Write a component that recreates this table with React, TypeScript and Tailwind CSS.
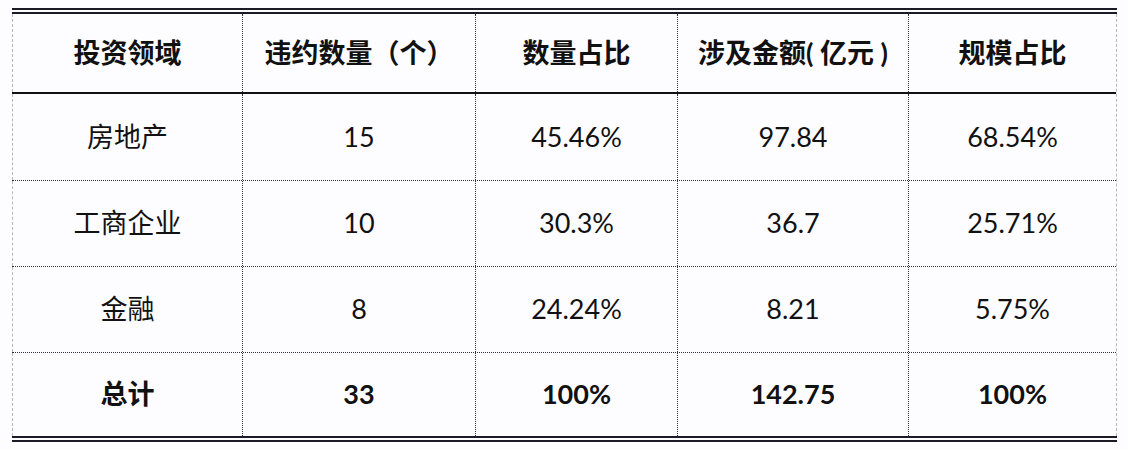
const headers = ['投资领域', '违约数量（个）', '数量占比', '涉及金额( 亿元 )', '规模占比'];

const rows = [
  ['房地产', '15', '45.46%', '97.84', '68.54%'],
  ['工商企业', '10', '30.3%', '36.7', '25.71%'],
  ['金融', '8', '24.24%', '8.21', '5.75%'],
];

const total = ['总计', '33', '100%', '142.75', '100%'];

const cols = ['w-[230px]', 'w-[233px]', 'w-[202px]', 'w-[231px]', 'w-[208px]'];

function Row({ cells, height, bold, line }: { cells: string[]; height: string; bold?: boolean; line: string }) {
  return (
    <div className={`flex ${height} ${line}`}>
      {cells.map((c, i) => (
        <div
          key={i}
          className={`${cols[i]} ${
            i === 0 ? 'border-l border-dashed border-[#b8b8b8]' : 'border-l border-dotted border-[#2e2e3a]'
          } flex items-center justify-center ${bold ? 'font-bold' : 'font-normal'} shrink-0`}
        >
          {c}
        </div>
      ))}
    </div>
  );
}

export default function App() {
  return (
    <div className="w-[1128px] h-[450px] bg-[#fdfdff] pt-2 pl-3 text-[27px] text-[#111] font-['Lato','Noto_Sans_CJK_SC',sans-serif]">
      <div className="w-[1105px]">
        <div className="border-t-[6px] border-double border-[#1b1b28]" />
        <div className="border-r border-dashed border-[#b8b8b8]">
          <Row cells={headers} height="h-[80px]" bold line="border-b-2 border-solid border-b-[#111]" />
          {rows.map((r, i) => (
            <Row
              key={i}
              cells={r}
              height={i === 0 ? 'h-[87px]' : 'h-[86px]'}
              line="border-b border-dotted border-b-[#2e2e3a]"
            />
          ))}
          <Row cells={total} height="h-[83px]" bold line="" />
        </div>
        <div className="border-t-[6px] border-double border-[#1b1b28]" />
      </div>
    </div>
  );
}
